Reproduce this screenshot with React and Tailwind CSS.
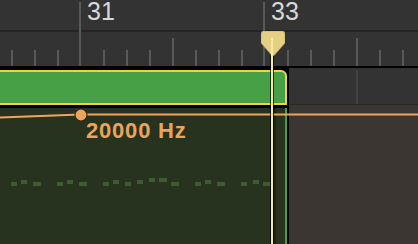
import React from 'react';

const smallTicks = [11, 34, 57, 103, 126, 149, 195, 218, 241, 287, 310, 333, 379, 402];
const tallTicks = [172, 356];
const majorLines = [79, 263];

// waveform dashes inside the region body: [x, y, w]
const dashes = [
  [11, 74, 6], [21, 72, 6], [33, 74, 8], [57, 74, 6], [67, 72, 6], [79, 74, 8],
  [103, 74, 6], [113, 72, 6], [125, 74, 6], [137, 72, 6], [149, 70, 6], [159, 70, 8],
  [171, 74, 8], [195, 74, 6], [205, 72, 6], [217, 74, 8], [241, 74, 6], [253, 72, 6],
  [263, 74, 7],
];

function Ruler() {
  return (
    <div className="relative h-[66px] flex flex-col bg-[#333333]">
      <div className="h-[30px]" />
      <div className="h-[2px] bg-[#242424]" />
      <div className="flex-1" />
      <svg className="absolute inset-0" width="418" height="66">
        {majorLines.map((x) => (
          <rect key={x} x={x} y="2" width="2" height="64" fill="#595959" />
        ))}
        {smallTicks.map((x) => (
          <rect key={x} x={x} y="50" width="2" height="16" fill="#595959" />
        ))}
        {tallTicks.map((x) => (
          <rect key={x} x={x} y="38" width="2" height="28" fill="#595959" />
        ))}
      </svg>
      <span className="absolute left-[87px] top-0 text-[25px] leading-[22px] text-[#d8d8d8]">31</span>
      <span className="absolute left-[271px] top-0 text-[25px] leading-[22px] text-[#d8d8d8]">33</span>
    </div>
  );
}

function Region() {
  return (
    <div className="w-[289px] flex flex-col bg-black pt-[2px] pr-[2px] rounded-tr-[8px]">
      <div className="h-[35px] bg-[#47a045] border-2 border-l-0 border-[#f2d23f] rounded-tr-[6px]" />
      <div className="h-[3px]" />
      <div className="relative flex-1 bg-[#28331f] border-r-2 border-[#46a042]">
        <svg className="absolute left-0 top-0" width="285" height="136">
          {dashes.map(([x, y, w], i) => (
            <rect key={i} x={x} y={y} width={w} height="4" fill="#3d5c30" />
          ))}
        </svg>
        <div className="absolute left-[273px] top-0 bottom-0 w-[3px] bg-[#1b2416]" />
      </div>
    </div>
  );
}

function Lane() {
  return (
    <div className="flex-1 flex flex-col">
      <div className="relative h-[36px] bg-[#333333]">
        <div className="absolute left-[67px] top-[2px] bottom-0 w-[2px] bg-[#434343]" />
      </div>
      <div className="h-[1px] bg-[#262626]" />
      <div className="flex-1 bg-[#3b3631]" />
    </div>
  );
}

function Playhead() {
  return (
    <>
      <svg className="absolute left-[261px] top-[31px]" width="24" height="26" viewBox="0 0 24 26">
        <path
          d="M3 0 H21 Q24 0 24 3 V12 L13.5 24 Q12 25.5 10.5 24 L0 12 V3 Q0 0 3 0 Z"
          fill="#e5cf83"
          stroke="#b9a560"
          strokeWidth="0.6"
        />
      </svg>
      <div className="absolute left-[270px] top-[56px] bottom-0 w-[4px] bg-black/70" />
      <div className="absolute left-[271px] top-[38px] bottom-0 w-[2px] bg-[#f7eaa6]" />
    </>
  );
}

function Automation() {
  return (
    <>
      <svg className="absolute left-0 top-0" width="418" height="244">
        <polyline
          points="0,117.5 81,114.5 418,114.5"
          fill="none"
          stroke="#eea55f"
          strokeWidth="2.2"
        />
        <circle cx="81" cy="115" r="6" fill="#eca55e" stroke="#3b2a12" strokeWidth="1.2" />
      </svg>
      <span className="absolute left-[86px] top-[120px] text-[22px] font-bold leading-none tracking-[0.8px] text-[#e9a45e]">
        20000 Hz
      </span>
    </>
  );
}

export default function App() {
  return (
    <div
      className="relative w-[418px] h-[244px] overflow-hidden bg-black flex flex-col"
      style={{ fontFamily: '"Liberation Sans", Arial, sans-serif' }}
    >
      <Ruler />
      <div className="h-[2px] bg-black" />
      <div className="flex flex-1">
        <Region />
        <Lane />
      </div>
      <Automation />
      <Playhead />
    </div>
  );
}
